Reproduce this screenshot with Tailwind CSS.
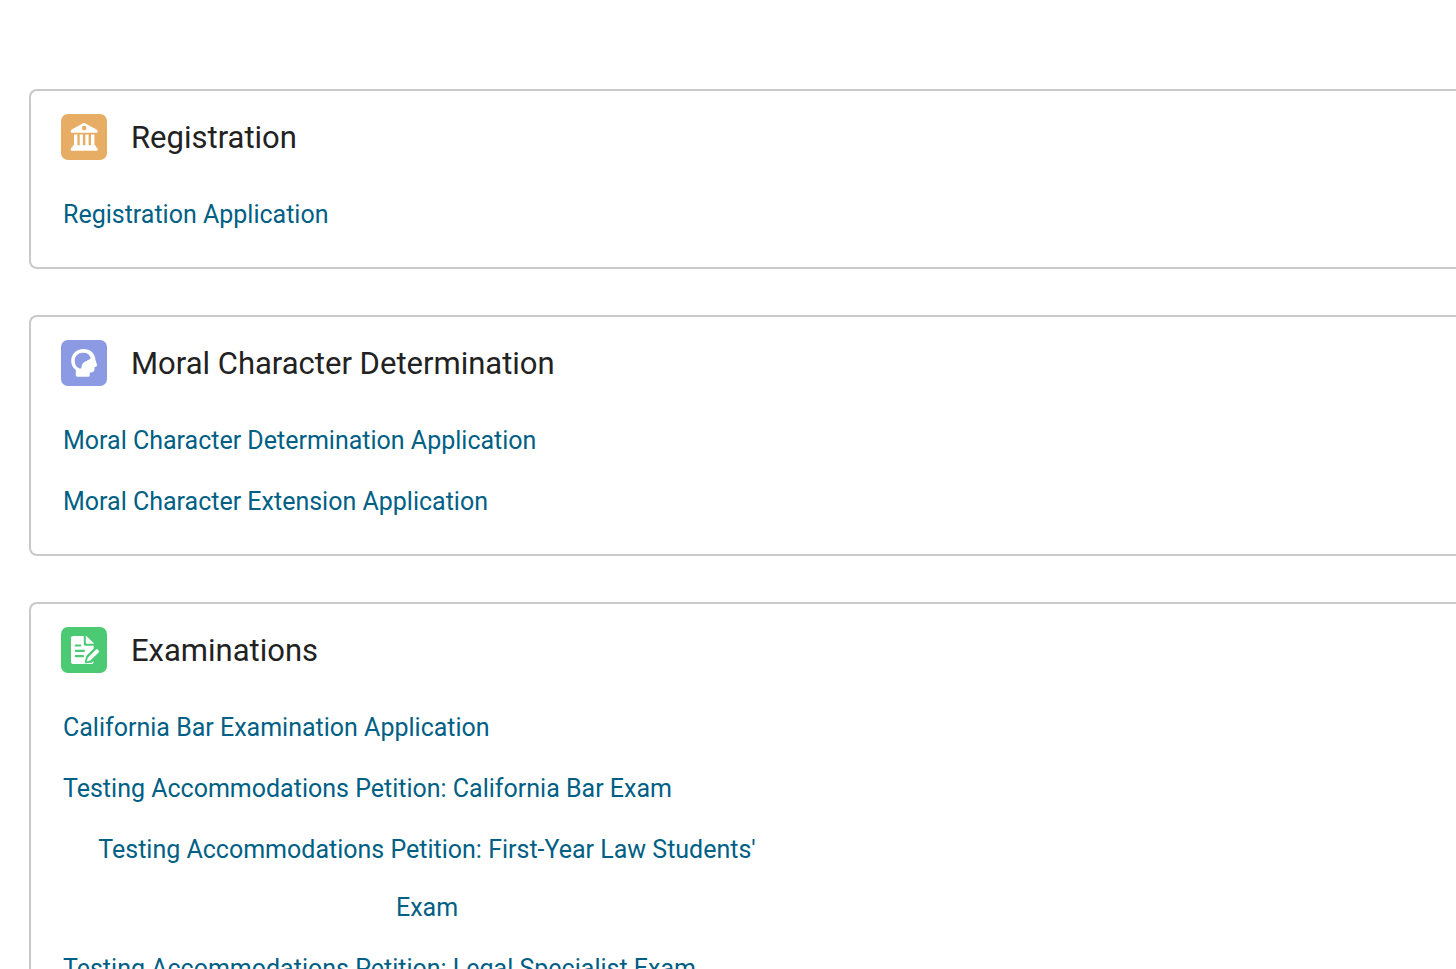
<!DOCTYPE html>
<html lang="en">
<head>
<meta charset="utf-8">
<meta name="viewport" content="width=device-width, initial-scale=1">
<title>Applications</title>
<script src="https://cdn.jsdelivr.net/npm/@tailwindcss/browser@4"></script>
</head>
<body class="h-screen overflow-hidden bg-white font-['Roboto',sans-serif] text-[#222]">
<main class="flex flex-col gap-[46px] pt-[89px] pl-[29px]">

  <section class="rounded-l-lg border-2 border-r-0 border-[#c9c9c9] px-[30px] pt-[23px] pb-[23px]">
    <header class="mb-6 flex items-start gap-6">
      <svg class="size-[46px] shrink-0" viewBox="0 0 46 46" aria-hidden="true">
        <rect width="46" height="46" rx="7" fill="#e8ad64"/>
        <path fill="#fff" fill-rule="evenodd" d="M22.1 9.300a2 2 0 0 1 1.800 0l11.600 6.200c.8.500 1.100 1.100 1.100 1.800v.4c0 .7-.4 1.100-1 1.100H10.700c-.6 0-1-.4-1-1.100v-.4c0-.7.3-1.300 1.100-1.800zM23.200 11.800a2.300 2.300 0 1 0 0 4.600 2.300 2.300 0 0 0 0-4.600z"/>
        <path fill="#fff" d="M13 20.500h3.400v11h-3.400zM18.700 20.500h3.200v11h-3.200zM24.400 20.500h3.200v11h-3.200zM30 20.500h3.400v11h-3.400zM12.600 31.200h21.300q1 0 1 1v1.200h.6q1.100 0 1.100 1v1.400q0 .9-.9.900H10.700q-.9 0-.9-.9v-1.400q0-1 1.100-1h.6v-1.200q0-1 1.100-1z"/>
      </svg>
      <h2 class="text-[31px] leading-[48px]">Registration</h2>
    </header>
    <ul class="flex flex-col items-start gap-[3px] pl-[2px] text-[25px] leading-[58px] text-[#005f85]">
      <li><a href="#">Registration Application</a></li>
    </ul>
  </section>

  <section class="rounded-l-lg border-2 border-r-0 border-[#c9c9c9] px-[30px] pt-[23px] pb-[23px]">
    <header class="mb-6 flex items-start gap-6">
      <svg class="size-[46px] shrink-0" viewBox="0 0 46 46" aria-hidden="true">
        <rect width="46" height="46" rx="7" fill="#8b9ae3"/>
        <path fill="#fff" fill-rule="evenodd" d="M22.400 8.900c7.200 0 11.700 4.600 12 10.700l1.500 5c.3.900.1 1.700-.7 2l-1.700.6v1.900c0 2.200-1.200 3.300-3.200 3.300h-1.600v3.200c0 .8-.4 1.200-1.200 1.200H16c-.8 0-1.200-.4-1.200-1.200v-5.500C12 27.800 10.200 25 10.200 21c0-7 5-12.100 12.200-12.100zM22 12.700c-4.900 0-8.300 3.300-8.300 8 0 3.900 1.900 6.600 4.900 7.800 1.300.4 1.700-.2 1.900-1.500.4-3.300 2.200-5.300 5.400-6 .5-.9 1.300-1.400 2.500-1.500.9-.1 1.300-.6 1.100-1.500C28.800 14.500 26 12.700 22 12.700z"/>
      </svg>
      <h2 class="text-[31px] leading-[48px]">Moral Character Determination</h2>
    </header>
    <ul class="flex flex-col items-start gap-[3px] pl-[2px] text-[25px] leading-[58px] text-[#005f85]">
      <li><a href="#">Moral Character Determination Application</a></li>
      <li><a href="#">Moral Character Extension Application</a></li>
    </ul>
  </section>

  <section class="rounded-l-lg border-2 border-r-0 border-[#c9c9c9] px-[30px] pt-[23px] pb-[23px]">
    <header class="mb-6 flex items-start gap-6">
      <svg class="size-[46px] shrink-0" viewBox="0 0 46 46" aria-hidden="true">
        <rect width="46" height="46" rx="7" fill="#4bca73"/>
        <path fill="#fff" d="M12.400 9h10.400v7.500c0 1.500.8 2.300 2.300 2.300h7.600v2.600l-7.500 7.500-1.300 6.800h6.900l1.800-1.800v.9c0 1.500-.9 2.300-2.400 2.300H12.400c-1.500 0-2.400-.8-2.400-2.300V11.300C10 9.800 10.900 9 12.400 9z"/>
        <path fill="#fff" d="M24.800 9.500q0-1 .8-.3l7 6.700q.7.800-.3.800h-6.500q-1 0-1-1z"/>
        <path d="M14.800 18.500h4.400M14.800 23.800h8.200M14.800 29.200h7.200" stroke="#4bca73" stroke-width="2.200" stroke-linecap="round"/>
        <path fill="#fff" stroke="#4bca73" stroke-width="1.600" d="M26.200 30.300l8.300-8.400c.8-.8 1.800-.8 2.600 0l1.300 1.300c.8.800.8 1.700 0 2.500L30 34l-4.500 1.500q-1 .2-.8-.8z"/>
      </svg>
      <h2 class="text-[31px] leading-[48px]">Examinations</h2>
    </header>
    <ul class="flex flex-col items-start gap-[3px] pl-[2px] text-[25px] leading-[58px] text-[#005f85]">
      <li><a href="#">California Bar Examination Application</a></li>
      <li><a href="#">Testing Accommodations Petition: California Bar Exam</a></li>
      <li class="w-full max-w-[728px] px-4 text-center"><a href="#">Testing Accommodations Petition: First-Year Law Students' Exam</a></li>
      <li><a href="#">Testing Accommodations Petition: Legal Specialist Exam</a></li>
    </ul>
  </section>

</main>
</body>
</html>
